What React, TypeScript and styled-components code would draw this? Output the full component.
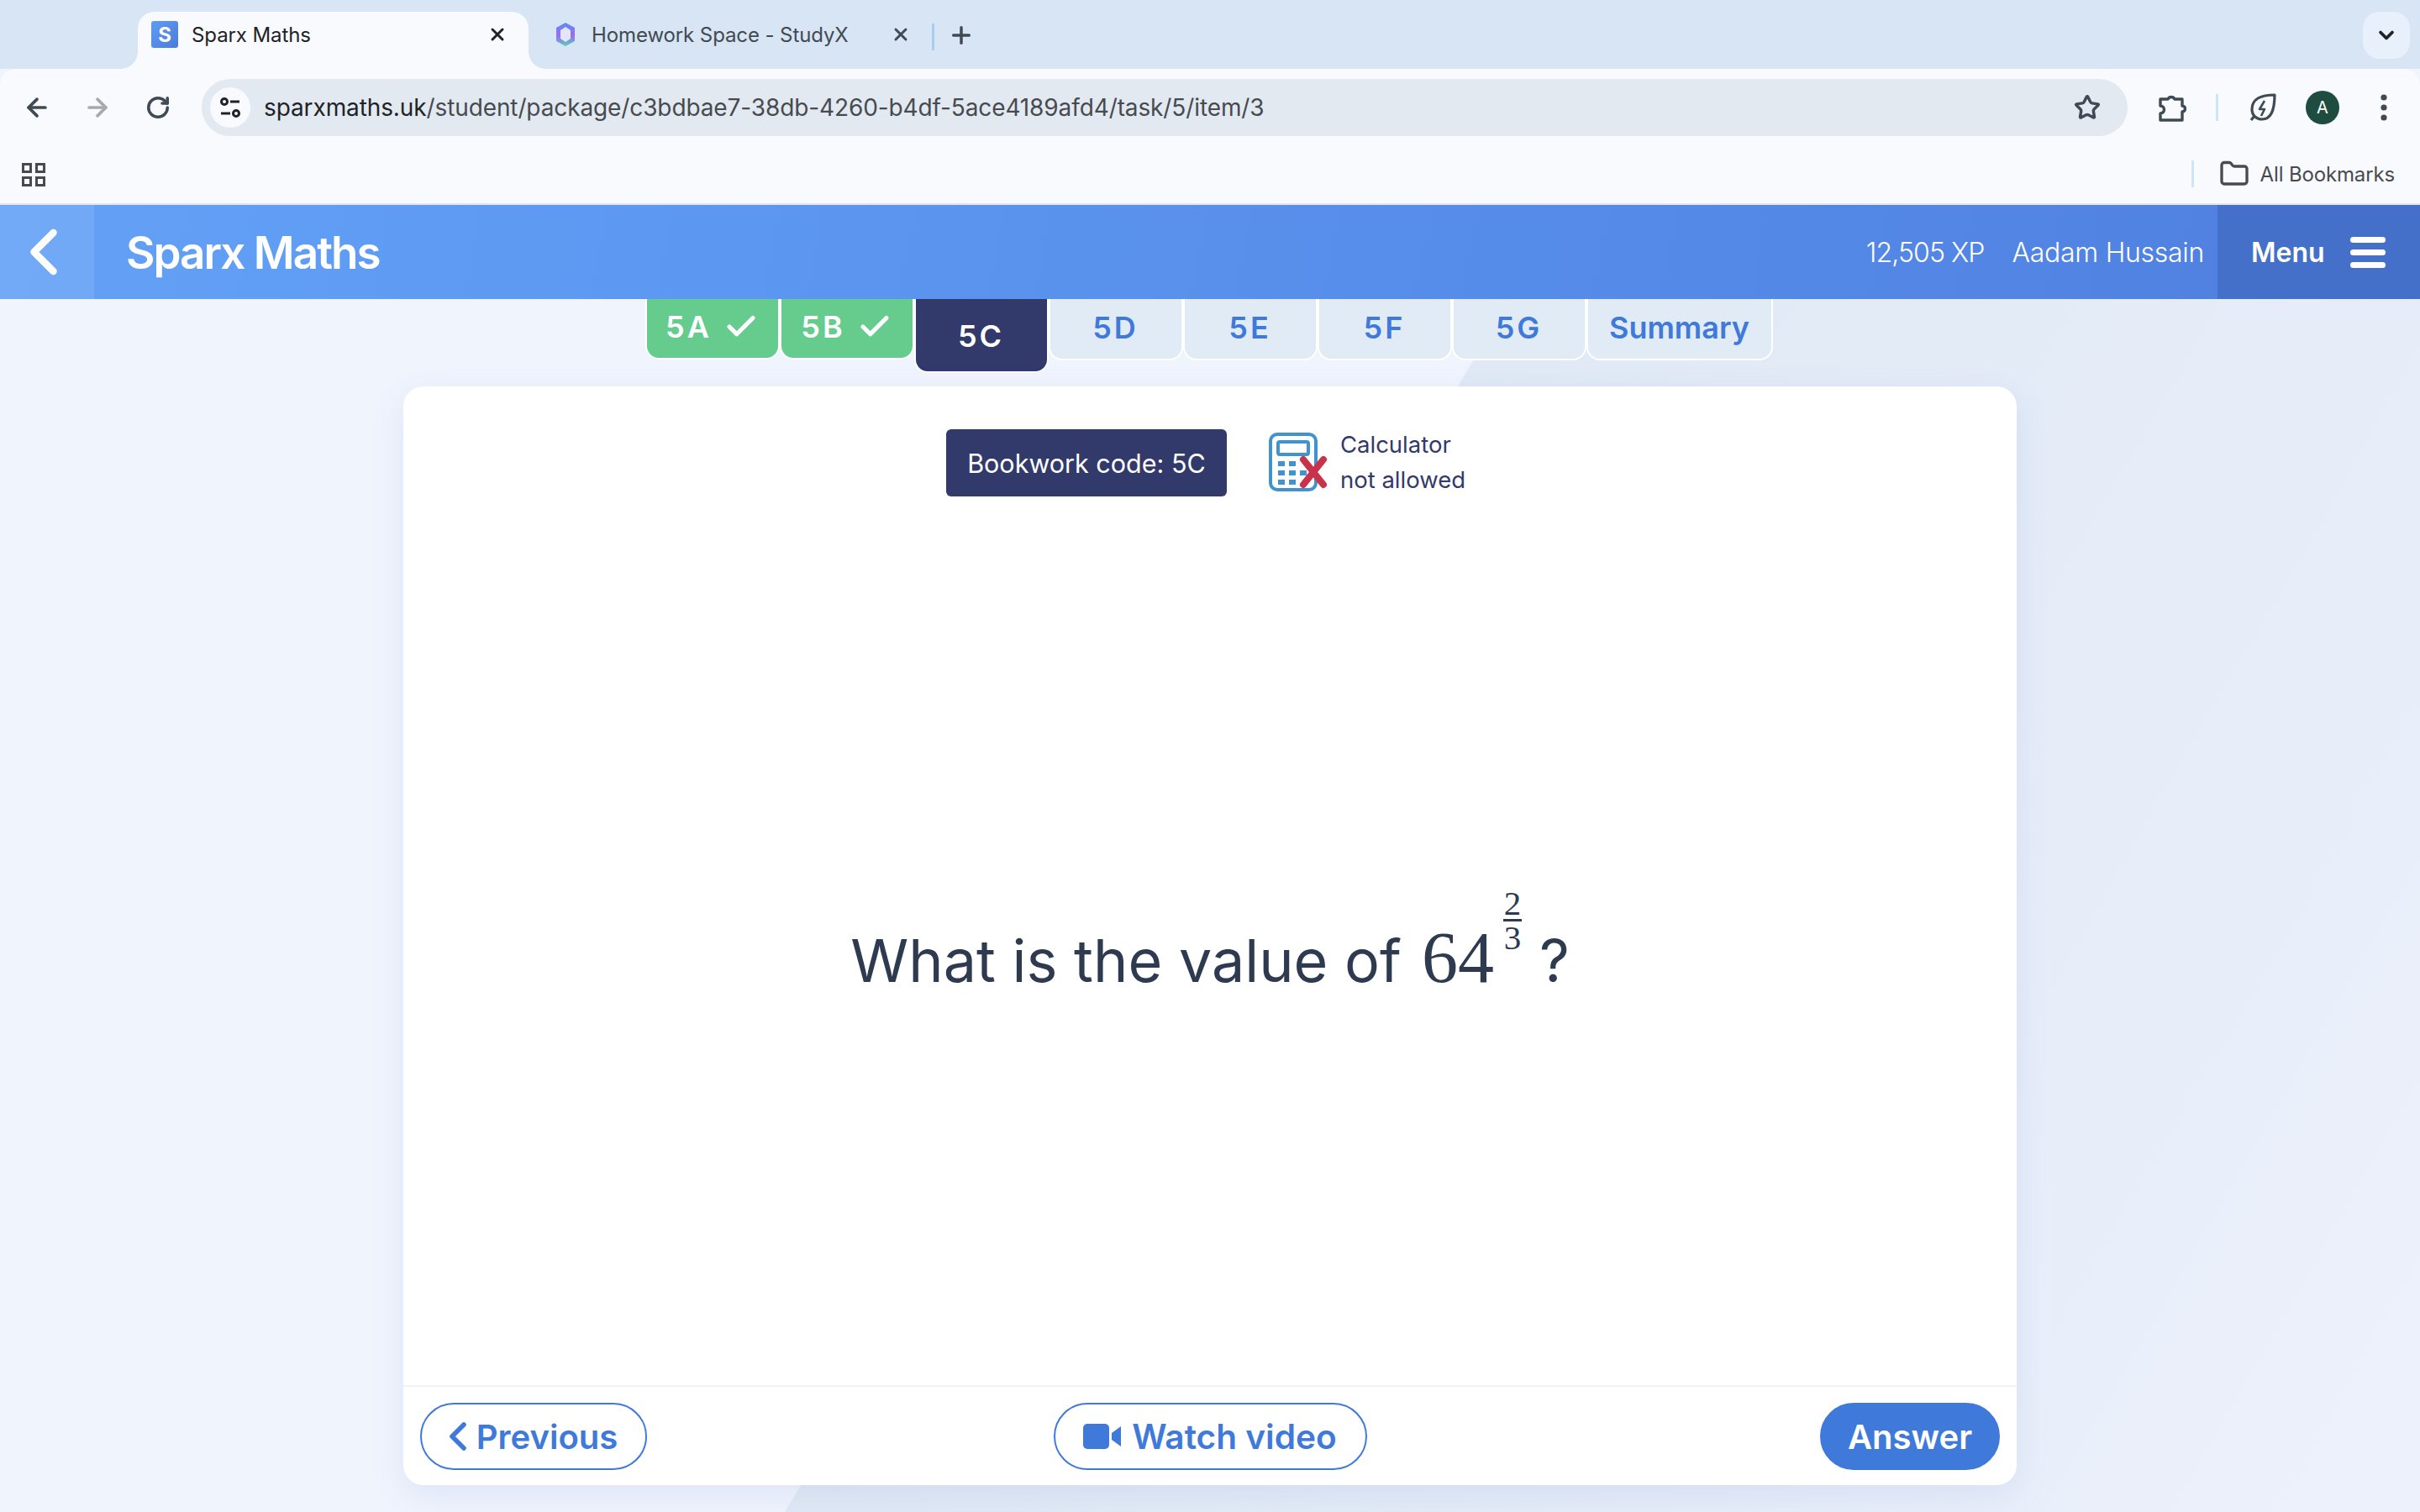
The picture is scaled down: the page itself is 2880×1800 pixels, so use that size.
import React from "react";
import styled, { createGlobalStyle } from "styled-components";
import { ArrowLeft, ArrowRight, RotateCw, Star, X, Plus, ChevronDown, ChevronLeft, Folder, Check } from "lucide-react";

const Global = createGlobalStyle`
  html, body { margin: 0; padding: 0; background: #f0f4fd; overflow: hidden; }
  * { box-sizing: border-box; }
  body { font-family: "Inter", "Liberation Sans", sans-serif; }
`;

const Page = styled.div`
  width: 2880px;
  height: 1800px;
  display: flex;
  flex-direction: column;
  overflow: hidden;
`;

const TabStrip = styled.div`
  height: 82px;
  flex: none;
  background: #d7e5f4;
  display: flex;
  align-items: flex-end;
  padding-left: 164px;
  padding-right: 12px;
  color: #1f2328;
`;

const BrowserTab = styled.div<{ $active?: boolean }>`
  height: 68px;
  width: ${(p) => (p.$active ? "465px" : "auto")};
  flex: none;
  display: flex;
  align-items: center;
  padding: 0 0 14px ${(p) => (p.$active ? "16px" : "31px")};
  font-size: 24px;
  letter-spacing: -0.1px;
  color: ${(p) => (p.$active ? "#1f2328" : "#414a52")};
  background: ${(p) => (p.$active ? "#f8fafd" : "transparent")};
  border-radius: 20px 20px 0 0;
  position: relative;
  ${(p) =>
    p.$active &&
    `
    &::before, &::after {
      content: "";
      position: absolute;
      bottom: 0;
      width: 20px;
      height: 20px;
      background: radial-gradient(circle at var(--cx) 0, #d7e5f4 19.5px, #f8fafd 20px);
    }
    &::before { left: -20px; --cx: 0; }
    &::after { right: -20px; --cx: 100%; }
  `}
`;

const SFavicon = styled.div`
  width: 32px;
  height: 32px;
  border-radius: 3px;
  background: linear-gradient(135deg, #5f9cf3, #4a7cdb);
  color: #fff;
  font-weight: 700;
  font-size: 24px;
  display: flex;
  align-items: center;
  justify-content: center;
  margin-right: 16px;
`;

const TabTitle = styled.span`
  flex: 1;
  white-space: nowrap;
  margin-right: 46px;
`;

const CloseSlot = styled.span`
  width: 32px;
  display: flex;
  justify-content: center;
  margin-right: 21px;
`;

const TabSeparator = styled.div`
  width: 3px;
  height: 32px;
  background: #a8cdf2;
  margin: 0 0 22px 0;
  flex: none;
`;

const PlusSlot = styled.div`
  width: 34px;
  margin: 0 0 24px 15px;
  display: flex;
  justify-content: center;
  color: #414a52;
`;

const TabSearch = styled.div`
  margin: 14px 0 0 auto;
  align-self: flex-start;
  width: 56px;
  height: 56px;
  border-radius: 20px;
  background: #e8f1fb;
  display: flex;
  align-items: center;
  justify-content: center;
  color: #1f2328;
`;

const ChromeBody = styled.div`
  flex: none;
  height: 162px;
  background: #f8fafd;
  border-radius: 20px 20px 0 0;
  border-bottom: 2px solid #e2e6ec;
`;

const Toolbar = styled.div`
  height: 92px;
  display: flex;
  align-items: center;
  padding: 12px 16px 12px 26px;
`;

const NavIcon = styled.div<{ $dim?: boolean }>`
  width: 36px;
  height: 36px;
  display: flex;
  align-items: center;
  justify-content: center;
  margin-right: 36px;
  color: ${(p) => (p.$dim ? "#a7a9ac" : "#3f4a54")};
  flex: none;
`;

const Omnibox = styled.div`
  height: 68px;
  flex: none;
  width: 2292px;
  margin-left: -2px;
  background: #e2e9f0;
  border-radius: 34px;
  display: flex;
  align-items: center;
  padding: 0 32px 0 10px;
`;

const TuneBadge = styled.div`
  width: 48px;
  height: 48px;
  border-radius: 50%;
  background: #f8fafd;
  display: flex;
  align-items: center;
  justify-content: center;
  flex: none;
  margin-right: 16px;
`;

const Url = styled.div`
  font-size: 28px;
  letter-spacing: -0.11px;
  color: #474b50;
  flex: 1;
  white-space: nowrap;
  b {
    font-weight: 400;
    color: #1f2328;
  }
`;

const ToolIcons = styled.div`
  display: flex;
  align-items: center;
  flex: 1;
  padding-left: 36px;
  color: #3f4a54;
`;

const ToolDivider = styled.div`
  width: 3px;
  height: 32px;
  background: #d0e4f8;
  margin: 0 36px 0 35px;
`;

const Avatar = styled.div`
  width: 40px;
  height: 40px;
  border-radius: 50%;
  background: #1e4d40;
  color: #fff;
  font-size: 20px;
  display: flex;
  align-items: center;
  justify-content: center;
  margin-left: 34px;
  margin-right: 49px;
`;

const BookmarksBar = styled.div`
  height: 68px;
  display: flex;
  align-items: flex-start;
  padding: 7px 30px 0 26px;
  color: #474b50;
  font-size: 24px;
  letter-spacing: -0.15px;
`;

const AppsGrid = styled.div`
  display: grid;
  grid-template-columns: 12px 12px;
  gap: 4px;
  margin-top: 13px;
`;

const AppsCell = styled.span`
  width: 12px;
  height: 12px;
  border: 3px solid #474b50;
`;

const BookmarkRight = styled.div`
  margin-left: auto;
  display: flex;
  align-items: center;
  height: 32px;
  margin-top: 10px;
`;

const BarDivider = styled.div`
  width: 3px;
  height: 32px;
  background: #d0e4f8;
  margin-right: 30px;
`;

const FolderLabel = styled.span`
  margin-left: 13px;
  white-space: nowrap;
`;

const Header = styled.header`
  flex: none;
  height: 112px;
  display: flex;
  align-items: stretch;
  background: linear-gradient(100deg, #63a1f6 0%, #5c97f1 30%, #4f7fe0 100%);
  color: #fff;
`;

const BackButton = styled.div`
  width: 112px;
  background: rgba(255, 255, 255, 0.1);
  display: flex;
  align-items: center;
  justify-content: center;
  padding-right: 8px;
`;

const Brand = styled.div`
  font-size: 53px;
  font-weight: 600;
  letter-spacing: -2px;
  margin: 2px 0 0 38px;
  align-self: center;
`;

const HeaderInfo = styled.div`
  margin-left: auto;
  display: flex;
  align-items: center;
  gap: 33px;
  font-size: 32px;
  padding-right: 16px;
  font-weight: 300;
  letter-spacing: -0.3px;
`;

const XpCount = styled.span`
  letter-spacing: -0.9px;
`;

const MenuButton = styled.div`
  width: 241px;
  background: #4570c9;
  display: flex;
  align-items: center;
  padding-left: 40px;
  font-size: 32px;
  font-weight: 600;
`;

const MenuBars = styled.div`
  display: flex;
  flex-direction: column;
  gap: 8px;
  margin-left: 30px;
`;

const MenuBar = styled.span`
  display: block;
  width: 42px;
  height: 7px;
  border-radius: 4px;
  background: #fff;
`;

const Main = styled.main`
  flex: 1;
  position: relative;
  background: #f0f4fd;
  display: flex;
  flex-direction: column;
  align-items: center;
  &::before {
    content: "";
    position: absolute;
    inset: 0;
    background: linear-gradient(120deg, #e0e9f5 48%, #e6edf9 77%, #edf1fb 100%);
    clip-path: polygon(1797px 0, 2880px 0, 2880px 1444px, 934px 1444px);
  }
`;

const TaskTabs = styled.nav`
  position: relative;
  height: 104px;
  flex: none;
  display: flex;
  align-items: flex-start;
  margin-right: 3px;
`;

type TabKind = "done" | "current" | "todo";

const TaskTab = styled.div<{ $kind: TabKind; $wide?: boolean }>`
  width: ${(p) => (p.$wide ? "222px" : "160px")};
  height: ${(p) => (p.$kind === "current" ? "88px" : p.$kind === "done" ? "72px" : "73px")};
  display: flex;
  align-items: center;
  justify-content: center;
  gap: 14px;
  padding-top: ${(p) => (p.$kind === "current" ? "2px" : "0")};
  padding-bottom: ${(p) => (p.$kind === "current" ? "0" : "4px")};
  background: ${(p) => (p.$kind === "done" ? "#65cc8d" : p.$kind === "current" ? "#32396b" : "#e1ebf6")};
  color: ${(p) => (p.$kind === "todo" ? "#3f79da" : "#fff")};
  border: 2px solid #fff;
  border-top: none;
  border-radius: 0 0 16px 16px;
  font-size: 36px;
  font-weight: 600;
  letter-spacing: 3px;
`;

const SummaryLabel = styled.span`
  letter-spacing: 0;
`;

const Card = styled.section`
  position: relative;
  width: 1920px;
  height: 1308px;
  flex: none;
  background: #fff;
  border-radius: 24px;
  box-shadow: 0 12px 40px rgba(70, 100, 190, 0.1);
  display: flex;
  flex-direction: column;
`;

const CardTop = styled.div`
  display: flex;
  justify-content: center;
  align-items: center;
  padding: 48px 10px 0 0;
  gap: 50px;
`;

const BookworkCode = styled.div`
  width: 334px;
  height: 80px;
  background: #32396b;
  color: #fff;
  border-radius: 6px;
  font-size: 30.5px;
  display: flex;
  align-items: center;
  justify-content: center;
`;

const CalcBlock = styled.div`
  display: flex;
  align-items: center;
  gap: 13px;
`;

const CalcText = styled.div`
  font-size: 27.5px;
  line-height: 42px;
  color: #32396b;
  margin-bottom: 2px;
`;

const QuestionArea = styled.div`
  flex: 1;
  display: flex;
  align-items: center;
  justify-content: center;
  color: #2e3a50;
  padding-top: 61px;
`;

const Question = styled.div`
  display: flex;
  align-items: baseline;
  font-size: 70px;
`;

const MathNum = styled.span`
  font-family: "Liberation Serif", serif;
  font-size: 86px;
  margin-left: 24px;
`;

const Fraction = styled.span`
  display: inline-flex;
  flex-direction: column;
  align-items: center;
  font-family: "Liberation Serif", serif;
  font-size: 41px;
  line-height: 38px;
  width: 22px;
  margin: 0 21px 0 11px;
  transform: translateY(-80px);
`;

const FracTop = styled.span`
  border-bottom: 3px solid #2e3a50;
  width: 100%;
  text-align: center;
`;

const Footer = styled.div`
  height: 119px;
  flex: none;
  border-top: 2px solid #f0f4fa;
  padding: 19px 20px 0;
  display: grid;
  grid-template-columns: 1fr auto 1fr;
  align-items: start;
`;

const PillButton = styled.div<{ $filled?: boolean; $side?: string }>`
  height: 80px;
  border-radius: 40px;
  border: 2px solid #3f79da;
  background: ${(p) => (p.$filled ? "#3f79da" : "#fff")};
  color: ${(p) => (p.$filled ? "#fff" : "#3f79da")};
  font-size: 40px;
  font-weight: 600;
  display: inline-flex;
  align-items: center;
  justify-content: center;
  justify-self: ${(p) => p.$side || "center"};
  gap: 14px;
`;

const PreviousButton = styled(PillButton)`
  width: 270px;
`;
const VideoButton = styled(PillButton)`
  width: 373px;
  font-size: 40.6px;
  gap: 12px;
`;
const AnswerButton = styled(PillButton)`
  width: 214px;
`;

const TuneIcon = () => (
  <svg width="26" height="26" viewBox="0 0 26 26" fill="none" stroke="#1f2328" strokeWidth="3">
    <circle cx="6" cy="6" r="3.5" />
    <path d="M13 6h11M2 20h11" />
    <circle cx="20" cy="20" r="3.5" />
  </svg>
);

const StudyXIcon = () => (
  <svg width="26" height="30" viewBox="0 0 26 30" style={{ marginRight: 18 }}>
    <defs>
      <linearGradient id="sx" x1="0" y1="0" x2="0" y2="1">
        <stop offset="0" stopColor="#5b8cf5" />
        <stop offset="0.55" stopColor="#9a6cf0" />
        <stop offset="1" stopColor="#55d0c0" />
      </linearGradient>
    </defs>
    <path d="M13 1 24 7v16l-11 6L2 23V7z" fill="url(#sx)" />
    <path d="M13 6l6 4v10l-6 4-6-4V10z" fill="#e6e4fb" />
  </svg>
);

const PuzzleIcon = () => (
  <svg width="34" height="36" viewBox="0 0 34 36" fill="none" stroke="#3f4a54" strokeWidth="3.4" strokeLinejoin="round">
    <path d="M3 8h9a4.5 4.5 0 0 1 8 0h9v8a3.5 3.5 0 0 1 0 7v10H3v-8a4.5 4.5 0 0 0 0-9z" />
  </svg>
);

const LeafIcon = () => (
  <svg width="34" height="36" viewBox="0 0 34 36" fill="none" stroke="#3f4a54" strokeWidth="3.2" strokeLinejoin="round">
    <path d="M31 3C15 3 4 8 4 20c0 8 6 12 12 12 11 0 15-12 15-29z" />
    <path d="M19 10l-6 10h6l-4 8" strokeWidth="2.6" />
    <path d="M7 28l-4 5" />
  </svg>
);

const CalculatorIcon = () => (
  <svg width="72" height="72" viewBox="0 0 72 72" fill="none">
    <rect x="2" y="2" width="54" height="66" rx="8" stroke="#4193cf" strokeWidth="4" />
    <rect x="11" y="11" width="36" height="15" rx="2" stroke="#4193cf" strokeWidth="4" />
    <g fill="#4193cf">
      <rect x="11" y="34" width="8" height="6" />
      <rect x="24" y="34" width="8" height="6" />
      <rect x="11" y="45" width="8" height="6" />
      <rect x="24" y="45" width="8" height="6" />
      <rect x="37" y="45" width="8" height="6" />
      <rect x="11" y="56" width="8" height="6" />
      <rect x="24" y="56" width="8" height="6" />
    </g>
    <path d="M41 32 65 62M65 32 41 62" stroke="#c8334a" strokeWidth="8" strokeLinecap="round" />
  </svg>
);

const VideoIcon = () => (
  <svg width="46" height="30" viewBox="0 0 46 30" fill="#3f79da">
    <rect x="0" y="0" width="31" height="30" rx="5" />
    <path d="M34 11 45 3v24l-11-8z" />
  </svg>
);

const tabs = ["5D", "5E", "5F", "5G"];

export default function App() {
  return (
    <Page>
      <Global />
      <TabStrip>
        <BrowserTab $active>
          <SFavicon>S</SFavicon>
          <TabTitle>Sparx Maths</TabTitle>
          <CloseSlot>
            <X size={24} strokeWidth={3} />
          </CloseSlot>
        </BrowserTab>
        <BrowserTab>
          <StudyXIcon />
          <TabTitle>Homework Space - StudyX</TabTitle>
          <CloseSlot>
            <X size={24} strokeWidth={3} />
          </CloseSlot>
        </BrowserTab>
        <TabSeparator />
        <PlusSlot>
          <Plus size={32} strokeWidth={2.6} />
        </PlusSlot>
        <TabSearch>
          <ChevronDown size={28} strokeWidth={3.2} />
        </TabSearch>
      </TabStrip>
      <ChromeBody>
        <Toolbar>
          <NavIcon>
            <ArrowLeft size={34} strokeWidth={2.6} />
          </NavIcon>
          <NavIcon $dim>
            <ArrowRight size={34} strokeWidth={2.6} />
          </NavIcon>
          <NavIcon>
            <RotateCw size={30} strokeWidth={2.8} />
          </NavIcon>
          <Omnibox>
            <TuneBadge>
              <TuneIcon />
            </TuneBadge>
            <Url>
              <b>sparxmaths.uk</b>/student/package/c3bdbae7-38db-4260-b4df-5ace4189afd4/task/5/item/3
            </Url>
            <Star size={32} strokeWidth={2.6} color="#3f4a54" />
          </Omnibox>
          <ToolIcons>
            <PuzzleIcon />
            <ToolDivider />
            <LeafIcon />
            <Avatar>A</Avatar>
            <svg width="8" height="32" viewBox="0 0 8 32" fill="#3f4a54">
              <circle cx="4" cy="4" r="3.6" />
              <circle cx="4" cy="16" r="3.6" />
              <circle cx="4" cy="28" r="3.6" />
            </svg>
          </ToolIcons>
        </Toolbar>
        <BookmarksBar>
          <AppsGrid>
            <AppsCell />
            <AppsCell />
            <AppsCell />
            <AppsCell />
          </AppsGrid>
          <BookmarkRight>
            <BarDivider />
            <Folder size={36} strokeWidth={2.2} />
            <FolderLabel>All Bookmarks</FolderLabel>
          </BookmarkRight>
        </BookmarksBar>
      </ChromeBody>
      <Header>
        <BackButton>
          <ChevronLeft size={92} strokeWidth={2.2} />
        </BackButton>
        <Brand>Sparx Maths</Brand>
        <HeaderInfo>
          <XpCount>12,505 XP</XpCount>
          <span>Aadam Hussain</span>
        </HeaderInfo>
        <MenuButton>
          Menu
          <MenuBars>
            <MenuBar />
            <MenuBar />
            <MenuBar />
          </MenuBars>
        </MenuButton>
      </Header>
      <Main>
        <TaskTabs>
          <TaskTab $kind="done">
            5A <Check size={42} strokeWidth={3} />
          </TaskTab>
          <TaskTab $kind="done">
            5B <Check size={42} strokeWidth={3} />
          </TaskTab>
          <TaskTab $kind="current">5C</TaskTab>
          {tabs.map((t) => (
            <TaskTab key={t} $kind="todo">
              {t}
            </TaskTab>
          ))}
          <TaskTab $kind="todo" $wide>
            <SummaryLabel>Summary</SummaryLabel>
          </TaskTab>
        </TaskTabs>
        <Card>
          <CardTop>
            <BookworkCode>Bookwork code: 5C</BookworkCode>
            <CalcBlock>
              <CalculatorIcon />
              <CalcText>
                Calculator
                <br />
                not allowed
              </CalcText>
            </CalcBlock>
          </CardTop>
          <QuestionArea>
            <Question>
              What is the value of
              <MathNum>64</MathNum>
              <Fraction>
                <FracTop>2</FracTop>
                <span>3</span>
              </Fraction>
              ?
            </Question>
          </QuestionArea>
          <Footer>
            <PreviousButton $side="start">
              <ChevronLeft size={56} strokeWidth={2.4} style={{ margin: "0 -20px 0 -18px" }} />
              Previous
            </PreviousButton>
            <VideoButton>
              <VideoIcon />
              Watch video
            </VideoButton>
            <AnswerButton $filled $side="end">
              Answer
            </AnswerButton>
          </Footer>
        </Card>
      </Main>
    </Page>
  );
}
